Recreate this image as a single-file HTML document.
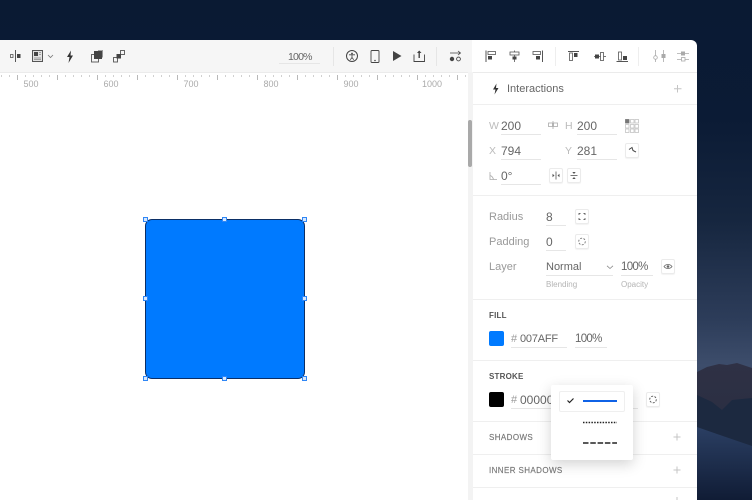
<!DOCTYPE html>
<html><head><meta charset="utf-8">
<style>
*{box-sizing:border-box}
html,body{margin:0;padding:0}
body{width:752px;height:500px;overflow:hidden;position:relative;background:#0b1b35;font-family:"Liberation Sans",sans-serif}
.a{position:absolute}
.t{position:absolute;white-space:nowrap;line-height:14px;font-size:12px;color:#666}
.l{color:#999;font-size:11px}
.v{font-size:11.500px;letter-spacing:-.7px}
.s{color:#bbb;font-size:10.500px}
.u{position:absolute;height:1px;background:#e6e6e6}
.hd{position:absolute;height:1px;background:#efefef;left:473px;width:224px}
.btn{position:absolute;width:14px;height:15px;background:#fff;border:1px solid #ebebeb;border-radius:2px;box-shadow:0 1px 1px rgba(0,0,0,.05)}
.cap{position:absolute;white-space:nowrap;font-size:8px;font-weight:bold;letter-spacing:.2px;color:#555;line-height:10px}
.cp2{position:absolute;white-space:nowrap;font-size:8px;letter-spacing:.4px;color:#777;line-height:10px;-webkit-text-stroke:.15px #777}
.rl{position:absolute;top:78px;font-size:9px;color:#aaa;line-height:12px;width:30px;text-align:center}
svg{position:absolute;overflow:visible}
</style></head><body>
<div class="a" style="left:0;top:0;width:752px;height:500px;background:linear-gradient(180deg,#0a1a33 0,#0b1b35 120px,#16263f 220px,#2d3d5a 320px,#3d4d6b 365px,#2a3a58 500px)"></div>
<svg style="left:697px;top:340px" width="55" height="160" viewBox="0 0 55 160">
<defs>
<linearGradient id="g1" x1="0" y1="0" x2="0" y2="1"><stop offset="0" stop-color="#2f3145"/><stop offset="1" stop-color="#232a3e"/></linearGradient>
<linearGradient id="g2" x1="0" y1="0" x2="0" y2="1"><stop offset="0" stop-color="#2b3f63"/><stop offset="1" stop-color="#101c35"/></linearGradient>
</defs>
<path d="M0 32L10 27 22 24 30 25 40 23 55 28V160H0Z" fill="url(#g1)"/>
<path d="M0 55L15 62 25 70 35 60 55 58V160H0Z" fill="#1c2940"/>
<path d="M0 87L20 94 55 106V160H0Z" fill="url(#g2)"/>
</svg>
<div class="a" style="left:0;top:40px;width:697px;height:460px;background:#fff;border-top-right-radius:6px;overflow:hidden">
<div class="a" style="left:0;top:0;width:472px;height:32px;background:#f6f6f6"></div>
<div class="a" style="left:0;top:32px;width:472px;height:1px;background:#ebebeb"></div>
<div class="a" style="left:468px;top:32px;width:5px;height:428px;background:#f3f3f3"></div>
<div class="a" style="left:468px;top:80px;width:4px;height:47px;background:#a9a9a9;border-radius:2px"></div>
<div class="a" style="left:473px;top:32px;width:224px;height:1px;background:#ebebeb"></div>
</div>

<!-- ruler -->
<div class="a" style="left:1px;top:75px;width:466px;height:2px;background:repeating-linear-gradient(90deg,#d0d0d0 0,#d0d0d0 1px,transparent 1px,transparent 8px)"></div>
<div class="a" style="left:17px;top:75px;width:450px;height:5px;background:repeating-linear-gradient(90deg,#b8b8b8 0,#b8b8b8 1px,transparent 1px,transparent 40px)"></div>
<div class="rl" style="left:16px">500</div>
<div class="rl" style="left:96px">600</div>
<div class="rl" style="left:176px">700</div>
<div class="rl" style="left:256px">800</div>
<div class="rl" style="left:336px">900</div>
<div class="rl" style="left:417px">1000</div>

<!-- toolbar left icons -->
<svg style="left:0;top:40px" width="140" height="32" viewBox="0 0 140 32" fill="none" stroke="#555">
<path d="M15.500 10V22" stroke-width="1"/><rect x="10.500" y="14.500" width="2.500" height="3" stroke-width=".8"/><rect x="17" y="14" width="3.500" height="4" fill="#444" stroke="none"/>
<rect x="32.500" y="10.500" width="10" height="11" stroke-width="1" fill="#e2e2e2"/><rect x="34" y="12" width="4" height="4" fill="#444" stroke="none"/><path d="M39 12.500h2M39 14.500h2M34 18h7M34 19.500h7" stroke-width=".7" stroke="#888"/>
<path d="M48 15l2.500 2.500L53 15" stroke-width=".8" stroke="#777"/>
<path d="M71 10.500L67 17h2.500L68.500 23 73 15.500H70.500Z" fill="#333" stroke="none"/>
<rect x="91.500" y="14.500" width="7" height="7.500" stroke-width=".9"/><rect x="94" y="11" width="8" height="8" fill="#444" stroke="none"/><path d="M98 10.500h4.500v7" stroke="#555" stroke-width=".6"/>
<rect x="113.500" y="17.500" width="4" height="4.500" stroke-width=".9"/><rect x="120.500" y="10.500" width="4" height="4" stroke-width=".9"/><rect x="116.500" y="14" width="4.500" height="4.500" fill="#444" stroke="none"/>
</svg>
<div class="t" style="left:288px;top:50px;font-size:10.500px;letter-spacing:-.8px;color:#666">100%</div>
<div class="u" style="left:279px;top:63px;width:41px"></div>
<div class="a" style="left:333px;top:47px;width:1px;height:19px;background:#e6e6e6"></div>
<div class="a" style="left:436px;top:47px;width:1px;height:19px;background:#e6e6e6"></div>
<svg style="left:340px;top:40px" width="130" height="32" viewBox="0 0 130 32" fill="none" stroke="#444">
<circle cx="12" cy="16" r="5.500" stroke-width="1"/><circle cx="12" cy="13.500" r=".9" fill="#444" stroke="none"/><path d="M9 14.800h6M12 15v2.500M12 17.500l-1.700 2.300M12 17.500l1.700 2.300" stroke-width=".8"/>
<rect x="31" y="10.500" width="8" height="12" rx="1" stroke-width=".9"/><circle cx="35" cy="20.500" r=".8" fill="#444" stroke="none"/>
<path d="M53 11V21L61.500 16Z" fill="#444" stroke="none"/>
<path d="M74 14.500V21.500H84.500V14.500" stroke-width=".9"/><path d="M79.200 11V18" stroke-width="1.400"/><path d="M77 13l2.200-2.500L81.500 13" fill="#444" stroke="none"/>
<path d="M110 13H120M118 11l2.500 2-2.500 2" stroke-width=".8"/><circle cx="112" cy="19" r="2.200" fill="#444" stroke="none"/><circle cx="118.500" cy="19" r="1.900" stroke-width=".9"/>
</svg>
<div class="a" style="left:555px;top:47px;width:1px;height:19px;background:#eee"></div>
<div class="a" style="left:638px;top:47px;width:1px;height:19px;background:#eee"></div>
<svg style="left:473px;top:40px" width="224" height="32" viewBox="0 0 224 32" fill="none" stroke="#555">
<path d="M13 10.500V22" stroke-width="1"/><rect x="15" y="11.500" width="7.500" height="3" stroke-width=".8"/><rect x="15" y="16" width="4" height="3.500" fill="#444" stroke="none"/>
<path d="M41.500 10.500V22" stroke-width=".8"/><rect x="37" y="12" width="9" height="3" stroke-width=".8" fill="#fff"/><rect x="39.500" y="16.500" width="4" height="3" fill="#444" stroke="none"/>
<path d="M69.500 10.500V22" stroke-width="1"/><rect x="60" y="11.500" width="7.500" height="3" stroke-width=".8"/><rect x="63" y="16" width="4" height="3.500" fill="#444" stroke="none"/>
<path d="M95 11.500H106" stroke-width="1"/><rect x="96.500" y="13" width="3" height="7.500" stroke-width=".8"/><rect x="101" y="13" width="3.500" height="4" fill="#444" stroke="none"/>
<path d="M121 16.500H133" stroke-width=".8"/><rect x="122" y="14.500" width="4" height="4" fill="#444" stroke="none"/><rect x="127.500" y="12.500" width="3" height="8" stroke-width=".8" fill="#fff"/>
<path d="M143.500 21.500H155" stroke-width="1"/><rect x="145.500" y="12" width="3" height="8" stroke-width=".8"/><rect x="150" y="16" width="4" height="4" fill="#444" stroke="none"/>
<g stroke="#aaa"><path d="M182.500 10V22M190.500 10V22" stroke-width=".8"/><circle cx="182.500" cy="17.500" r="1.800" fill="#fff" stroke-width=".8"/><rect x="188.500" y="14" width="4" height="4" fill="#aaa" stroke="none"/>
<path d="M204 13.500H216M204 19.500H216" stroke-width=".8"/><rect x="208" y="11.500" width="4" height="4" fill="#aaa" stroke="none"/><rect x="208.500" y="17.500" width="3.500" height="3.500" fill="#fff" stroke-width=".8"/></g>
</svg>

<!-- canvas shape -->
<div class="a" style="left:145px;top:219px;width:160px;height:160px;background:#007aff;border:1px solid #0b2f66;border-radius:7px"></div>
<svg style="left:0;top:0" width="400" height="400" fill="#d6e8ff" stroke="#2f86f5" stroke-width="1">
<rect x="143.500" y="217.500" width="4" height="4"/><rect x="222.500" y="217.500" width="4" height="4"/><rect x="302.500" y="217.500" width="4" height="4"/>
<rect x="143.500" y="296.500" width="4" height="4"/><rect x="302.500" y="296.500" width="4" height="4"/>
<rect x="143.500" y="376.500" width="4" height="4"/><rect x="222.500" y="376.500" width="4" height="4"/><rect x="302.500" y="376.500" width="4" height="4"/>
</svg>

<!-- interactions -->
<svg style="left:473px;top:80px" width="224" height="20" fill="none" stroke="#444">
<path d="M23.500 3.500L20 9.500H22.500L21.500 14.500L25.500 8H23Z" fill="#333" stroke="none"/>
<path d="M204.500 5V12.500M201 8.800H208.500" stroke="#c4c4c4" stroke-width="1"/>
</svg>
<div class="t" style="left:507px;top:82px;font-size:11px;color:#666">Interactions</div>
<div class="hd" style="top:104px"></div>

<!-- size -->
<div class="t s" style="left:489px;top:119px">W</div>
<div class="t" style="left:501px;top:119px">200</div>
<div class="u" style="left:501px;top:134px;width:40px"></div>
<svg style="left:548px;top:120px" width="11" height="11" fill="none" stroke="#aaa" stroke-width=".8"><rect x=".5" y="3" width="4" height="3.500"/><rect x="5.500" y="3" width="4" height="3.500"/><path d="M5 1V9"/></svg>
<div class="t s" style="left:565px;top:119px">H</div>
<div class="t" style="left:577px;top:119px">200</div>
<div class="u" style="left:577px;top:134px;width:40px"></div>
<svg style="left:625px;top:119px" width="14" height="14" fill="none" stroke="#c4c4c4" stroke-width=".8">
<rect x=".5" y=".5" width="3.500" height="3.500" fill="#777" stroke="#777"/><rect x="5.500" y=".5" width="3.500" height="3.500"/><rect x="10" y=".5" width="3.500" height="3.500"/>
<rect x=".5" y="5.500" width="3.500" height="3.500"/><rect x="5.500" y="5.500" width="3.500" height="3.500"/><rect x="10" y="5.500" width="3.500" height="3.500"/>
<rect x=".5" y="10" width="3.500" height="3.500"/><rect x="5.500" y="10" width="3.500" height="3.500"/><rect x="10" y="10" width="3.500" height="3.500"/></svg>

<div class="t s" style="left:489px;top:144px">X</div>
<div class="t" style="left:501px;top:144px">794</div>
<div class="u" style="left:501px;top:159px;width:40px"></div>
<div class="t s" style="left:565px;top:144px">Y</div>
<div class="t" style="left:577px;top:144px">281</div>
<div class="u" style="left:577px;top:159px;width:40px"></div>
<div class="btn" style="left:625px;top:143px"></div>
<svg style="left:625px;top:143px" width="14" height="15" fill="none" stroke="#444" stroke-width="1"><path d="M4 6.500L7 4.500 8 7.500 11 9"/></svg>

<svg style="left:489px;top:171px" width="11" height="10" fill="none" stroke="#aaa" stroke-width=".8"><path d="M1 1V8.500H8"/><path d="M1 4.500C3 5 4 6.500 4.500 8.500" /></svg>
<div class="t" style="left:501px;top:169px">0°</div>
<div class="u" style="left:501px;top:184px;width:40px"></div>
<div class="btn" style="left:549px;top:168px"></div>
<div class="btn" style="left:567px;top:168px"></div>
<svg style="left:549px;top:168px" width="32" height="15" fill="none" stroke="#555" stroke-width=".8">
<path d="M7 3.500V11.500"/><path d="M5.500 7.500L3.500 5.800V9.200ZM8.500 7.500L10.500 5.800V9.200Z" fill="#555" stroke="none"/>
<path d="M21.500 7.500H28.500"/><path d="M25 6L23.300 4H26.700ZM25 9L23.300 11H26.700Z" fill="#555" stroke="none"/></svg>
<div class="hd" style="top:195px"></div>

<!-- radius -->
<div class="t l" style="left:489px;top:210px">Radius</div>
<div class="t" style="left:546px;top:210px">8</div>
<div class="u" style="left:546px;top:225px;width:20px"></div>
<div class="btn" style="left:575px;top:209px"></div>
<svg style="left:575px;top:209px" width="14" height="15" fill="none" stroke="#666" stroke-width=".9"><path d="M4 6V4.500H5.500M8.500 4.500H10V6M10 9V10.500H8.500M5.500 10.500H4V9"/></svg>

<div class="t l" style="left:489px;top:235px">Padding</div>
<div class="t" style="left:546px;top:235px">0</div>
<div class="u" style="left:546px;top:250px;width:20px"></div>
<div class="btn" style="left:575px;top:234px"></div>
<svg style="left:575px;top:234px" width="14" height="15" fill="none" stroke="#777" stroke-width=".9"><circle cx="7" cy="7.500" r="3.300" stroke-dasharray="2 1.400"/></svg>

<div class="t l" style="left:489px;top:260px">Layer</div>
<div class="t" style="left:546px;top:260px;font-size:11px">Normal</div>
<svg style="left:606px;top:265px" width="9" height="5" fill="none" stroke="#888" stroke-width=".8"><path d="M1 .800L4 3.500 7 .800"/></svg>
<div class="u" style="left:546px;top:275px;width:67px"></div>
<div class="t v" style="left:621px;top:260px">100%</div>
<div class="u" style="left:621px;top:275px;width:32px"></div>
<div class="btn" style="left:661px;top:259px"></div>
<svg style="left:661px;top:259px" width="14" height="15" fill="none" stroke="#666" stroke-width=".8"><path d="M3 7.500C5 4.800 9 4.800 11 7.500 9 10.200 5 10.200 3 7.500Z"/><circle cx="7" cy="7.500" r="1.300" fill="#666" stroke="none"/></svg>
<div class="t" style="left:546px;top:278px;font-size:8px;color:#b4b4b4">Blending</div>
<div class="t" style="left:621px;top:278px;font-size:8px;color:#b4b4b4">Opacity</div>
<div class="hd" style="top:299px"></div>

<!-- fill -->
<div class="cap" style="left:489px;top:311px">FILL</div>
<div class="a" style="left:489px;top:331px;width:15px;height:15px;background:#007aff;border-radius:2px"></div>
<div class="t" style="left:511px;top:332px;font-size:11px;color:#999">#</div>
<div class="t" style="left:520px;top:332px;font-size:11px;letter-spacing:-.2px">007AFF</div>
<div class="u" style="left:511px;top:347px;width:56px"></div>
<div class="t v" style="left:575px;top:332px">100%</div>
<div class="u" style="left:575px;top:347px;width:32px"></div>
<div class="hd" style="top:360px"></div>

<!-- stroke -->
<div class="cap" style="left:489px;top:372px">STROKE</div>
<div class="a" style="left:489px;top:392px;width:15px;height:15px;background:#000;border-radius:2px"></div>
<div class="t" style="left:511px;top:393px;font-size:11px;color:#999">#</div>
<div class="t" style="left:520px;top:393px">00000</div>
<div class="u" style="left:511px;top:408px;width:127px"></div>
<div class="btn" style="left:646px;top:392px"></div>
<svg style="left:646px;top:392px" width="14" height="15" fill="none" stroke="#555" stroke-width=".9"><circle cx="7" cy="7.500" r="3.300" stroke-dasharray="2 1.400"/></svg>
<div class="hd" style="top:421px"></div>

<div class="cp2" style="left:489px;top:433px">SHADOWS</div>
<svg style="left:673px;top:433px" width="9" height="9" stroke="#c4c4c4" stroke-width="1"><path d="M4 .500V7.500M.500 4H7.500"/></svg>
<div class="hd" style="top:454px"></div>
<div class="cp2" style="left:489px;top:466px">INNER SHADOWS</div>
<svg style="left:673px;top:466px" width="9" height="9" stroke="#c4c4c4" stroke-width="1"><path d="M4 .500V7.500M.500 4H7.500"/></svg>
<div class="hd" style="top:487px"></div>
<svg style="left:673px;top:497px" width="9" height="3" stroke="#c4c4c4" stroke-width="1"><path d="M4 0V3"/></svg>

<!-- popup -->
<div class="a" style="left:551px;top:385px;width:82px;height:75px;background:#fff;border-radius:2px;box-shadow:0 4px 14px rgba(0,0,0,.18)"></div>
<div class="a" style="left:559px;top:391px;width:66px;height:21px;border:1px solid #efefef;border-radius:2px"></div>
<svg style="left:551px;top:385px" width="82" height="75" fill="none">
<path d="M16.500 15.500L18.500 17.500 22.500 13.500" stroke="#222" stroke-width="1.200"/>
<path d="M32 16H66" stroke="#0f62e6" stroke-width="2"/>
<path d="M32 37.500H66" stroke="#222" stroke-width="1.600" stroke-dasharray="1.500 1.300"/>
<path d="M32 58H66" stroke="#222" stroke-width="1.600" stroke-dasharray="5.500 1.800"/>
</svg>
</body></html>
